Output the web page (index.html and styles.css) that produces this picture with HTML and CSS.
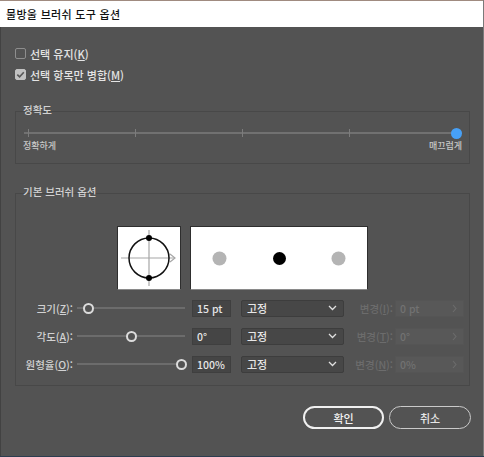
FILE: index.html
```html
<!DOCTYPE html>
<html lang="ko">
<head>
  <meta charset="UTF-8">
  <meta name="viewport" content="width=device-width, initial-scale=1.0">
  <title>물방울 브러쉬 도구 옵션</title>
  <link rel="stylesheet" href="styles.css">
</head>
<body>
  <div class="dialog">
    <div class="titlebar">물방울 브러쉬 도구 옵션</div>
    <div class="content">
      <label class="check"><span class="box"></span>선택 유지(<u>K</u>)</label>
      <label class="check"><span class="box checked">
        <svg width="11" height="11" viewBox="0 0 11 11"><path d="M2.3 5.6 L4.6 7.9 L8.8 3.2" fill="none" stroke="#585858" stroke-width="1.6"/></svg>
      </span>선택 항목만 병합(<u>M</u>)</label>

      <div class="group fidelity">
        <div class="group-title">정확도</div>
        <div class="fslider">
          <span class="tick"></span>
          <span class="tick"></span>
          <span class="tick"></span>
          <span class="tick"></span>
          <span class="fknob"></span>
        </div>
        <div class="fscale"><span>정확하게</span><span>매끄럽게</span></div>
      </div>

      <div class="group brush">
        <div class="group-title">기본 브러쉬 옵션</div>
        <div class="preview">
          <div class="pv pv-shape">
            <svg width="62" height="62" viewBox="0 0 62 62">
              <line x1="3" y1="31" x2="57" y2="31" stroke="#a6a6a6" stroke-width="1.2"/>
              <path d="M52 27 L57 31 L52 35" fill="none" stroke="#a6a6a6" stroke-width="1.2"/>
              <line x1="31" y1="3" x2="31" y2="59" stroke="#a6a6a6" stroke-width="1.2"/>
              <circle cx="31" cy="31" r="20" fill="none" stroke="#111" stroke-width="1.5"/>
              <circle cx="31" cy="11" r="3" fill="#000"/>
              <circle cx="31" cy="51" r="3" fill="#000"/>
            </svg>
          </div>
          <div class="pv pv-dots">
            <svg width="176" height="62" viewBox="0 0 176 62">
              <circle cx="28.5" cy="31.5" r="7" fill="#b4b4b4"/>
              <circle cx="88.5" cy="31.5" r="6.5" fill="#000"/>
              <circle cx="147.5" cy="31.5" r="7" fill="#b4b4b4"/>
            </svg>
          </div>
        </div>

        <div class="row">
          <span class="row-label">크기(<u>Z</u>):</span>
          <div class="track"><span class="knob" style="left: 5.5px"></span></div>
          <div class="field">15 pt</div>
          <div class="select">고정
            <svg width="9" height="6" viewBox="0 0 9 6"><path d="M1 1 L4.5 4.5 L8 1" fill="none" stroke="#e0e0e0" stroke-width="1.3"/></svg>
          </div>
          <span class="var-label">변경(<u>I</u>):</span>
          <div class="field disabled">0 pt
            <svg width="5" height="9" viewBox="0 0 5 9"><path d="M1 1 L4 4.5 L1 8" fill="none" stroke="#6c6c6c" stroke-width="1.1"/></svg>
          </div>
        </div>

        <div class="row">
          <span class="row-label">각도(<u>A</u>):</span>
          <div class="track"><span class="knob" style="left: 48.5px"></span></div>
          <div class="field">0°</div>
          <div class="select">고정
            <svg width="9" height="6" viewBox="0 0 9 6"><path d="M1 1 L4.5 4.5 L8 1" fill="none" stroke="#e0e0e0" stroke-width="1.3"/></svg>
          </div>
          <span class="var-label">변경(<u>T</u>):</span>
          <div class="field disabled">0°
            <svg width="5" height="9" viewBox="0 0 5 9"><path d="M1 1 L4 4.5 L1 8" fill="none" stroke="#6c6c6c" stroke-width="1.1"/></svg>
          </div>
        </div>

        <div class="row">
          <span class="row-label">원형율(<u>O</u>):</span>
          <div class="track"><span class="knob" style="left: 98.5px"></span></div>
          <div class="field">100%</div>
          <div class="select">고정
            <svg width="9" height="6" viewBox="0 0 9 6"><path d="M1 1 L4.5 4.5 L8 1" fill="none" stroke="#e0e0e0" stroke-width="1.3"/></svg>
          </div>
          <span class="var-label">변경(<u>N</u>):</span>
          <div class="field disabled">0%
            <svg width="5" height="9" viewBox="0 0 5 9"><path d="M1 1 L4 4.5 L1 8" fill="none" stroke="#6c6c6c" stroke-width="1.1"/></svg>
          </div>
        </div>
      </div>

      <div class="actions">
        <button class="btn btn-ok">확인</button>
        <button class="btn btn-cancel">취소</button>
      </div>
    </div>
  </div>
</body>
</html>
```

FILE: styles.css
```css
html, body {
  margin: 0;
  padding: 0;
}

body {
  background-color: #2c3d50;
  font-family: "Noto Sans CJK KR", "Noto Sans", sans-serif;
  font-weight: 500;
  height: 457px;
  overflow: hidden;
}

.dialog {
  width: 483px;
  height: 456px;
  border-right: 1px solid #7a7a7a;
  background: #535353;
  display: flex;
  flex-direction: column;
}

.titlebar {
  height: 26px;
  border-top: 1px solid #a08b80;
  background: #fff;
  color: #111;
  font-size: 11px;
  line-height: 26px;
  padding-left: 6px;
  letter-spacing: 0.3px;
}

.content {
  flex: 1;
  border-left: 1px solid #424242;
  padding: 16px 12px 0 14px;
}

.check {
  display: flex;
  align-items: center;
  height: 21px;
  font-size: 11px;
  color: #e4e4e4;
}

.check u, .row-label u, .var-label u {
  text-underline-offset: 1px;
}

.box {
  width: 9px;
  height: 9px;
  border: 1px solid #8e8e8e;
  border-radius: 2px;
  margin-right: 4px;
  display: flex;
}

.box.checked {
  background: #c2c2c2;
  border-color: #c2c2c2;
}

.box svg {
  margin: -1px;
}

.group {
  border: 1px solid #484848;
  margin-right: 1px;
}

.group-title {
  margin: -9px 0 0 7px;
  font-size: 10.5px;
  line-height: 14px;
  color: #d2d2d2;
}

.fidelity {
  margin-top: 26px;
  padding-bottom: 11px;
}

.fslider {
  height: 12px;
  margin: 10px 7px 0 8px;
  padding-left: 4px;
  display: flex;
  align-items: center;
  background: linear-gradient(#717171, #717171) center / 100% 2px no-repeat;
}

.tick {
  flex-shrink: 0;
  width: 1px;
  height: 8px;
  margin-right: 106px;
  background: #7c7c7c;
}

.tick:nth-child(4) {
  margin-right: 0;
}

.fknob {
  flex-shrink: 0;
  width: 11px;
  height: 11px;
  margin-left: auto;
  border-radius: 50%;
  background: #47a0f6;
}

.fscale {
  display: flex;
  justify-content: space-between;
  margin: 0 7px 0 7px;
  font-size: 9px;
  line-height: 13px;
  color: #c8c8c8;
}

.brush {
  margin-top: 29px;
  padding-bottom: 7px;
}

.preview {
  display: flex;
  gap: 9px;
  margin: 27px 0 4px 101px;
}

.pv {
  height: 62px;
  background: #fff;
  border: 1px solid #2e2e2e;
  border-bottom-color: #8a8a8a;
}

.pv-shape {
  width: 62px;
}

.pv-dots {
  width: 176px;
}

.row {
  display: flex;
  align-items: center;
  height: 28px;
  font-size: 10.5px;
}

.row-label {
  width: 57px;
  text-align: right;
  color: #d2d2d2;
}

.track {
  position: relative;
  width: 108px;
  height: 12px;
  margin-left: 4px;
  background: linear-gradient(#6c6c6c, #6c6c6c) center / 100% 2px no-repeat;
}

.knob {
  position: absolute;
  top: 0.5px;
  width: 7px;
  height: 7px;
  border: 2px solid #dcdcdc;
  border-radius: 50%;
  background: #535353;
}

.field {
  width: 33px;
  height: 15px;
  margin-left: 7px;
  padding-left: 4px;
  border: 1px solid #3f3f3f;
  background: #454545;
  color: #e6e6e6;
  line-height: 15px;
  display: flex;
  align-items: center;
  justify-content: space-between;
}

.select {
  width: 90px;
  height: 15px;
  margin-left: 10px;
  padding: 0 6px 0 5px;
  border: 1px solid #3d3d3d;
  border-radius: 2px;
  background: #474747;
  color: #e6e6e6;
  font-size: 11px;
  display: flex;
  align-items: center;
  justify-content: space-between;
}

.var-label {
  width: 49px;
  text-align: right;
  color: #6c6c6c;
}

.field.disabled {
  width: 57px;
  margin-left: 2px;
  padding-right: 6px;
  border-color: #555;
  background: #585858;
  color: #727272;
}

.actions {
  display: flex;
  justify-content: flex-end;
  gap: 5px;
  margin-top: 20px;
}

.btn {
  height: 23px;
  border-radius: 12px;
  background: transparent;
  font-family: inherit;
  font-weight: 500;
  font-size: 11px;
  padding: 0;
  cursor: pointer;
}

.btn-ok {
  width: 81px;
  border: 2px solid #f0f0f0;
  color: #f2f2f2;
}

.btn-cancel {
  width: 82px;
  border: 1.5px solid #cacaca;
  color: #e6e6e6;
}
```
